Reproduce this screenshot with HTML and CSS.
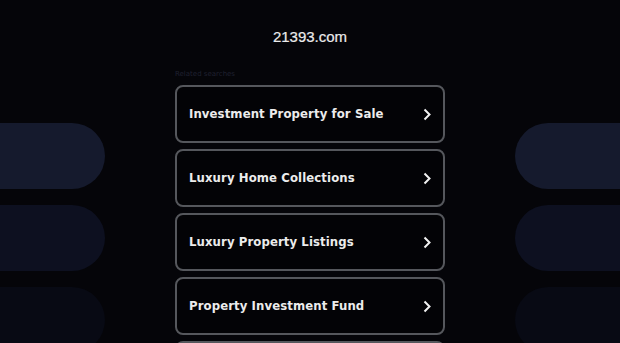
FILE: index.html
```html
<!DOCTYPE html>
<html lang="en">
<head>
    <meta charset="UTF-8">
    <meta name="viewport" content="width=device-width, initial-scale=1.0">
    <title>21393.com</title>
    <link rel="stylesheet" href="styles.css">
</head>
<body>

    <header class="site-header">
        <h1 class="domain">21393.com</h1>
    </header>

    <div class="layout">
        <aside class="side side-left">
            <div class="pill pill-1"></div>
            <div class="pill pill-2"></div>
            <div class="pill pill-3"></div>
        </aside>

        <main class="results">
            <div class="related-label">Related searches</div>

            <a class="result" href="#">
                <span>Investment Property for Sale</span>
                <svg class="chevron" width="8" height="13" viewBox="0 0 8 13"><path d="M1.5 1.5 L6.5 6.5 L1.5 11.5" fill="none" stroke="#f2f2f2" stroke-width="2"/></svg>
            </a>
            <a class="result" href="#">
                <span>Luxury Home Collections</span>
                <svg class="chevron" width="8" height="13" viewBox="0 0 8 13"><path d="M1.5 1.5 L6.5 6.5 L1.5 11.5" fill="none" stroke="#f2f2f2" stroke-width="2"/></svg>
            </a>
            <a class="result" href="#">
                <span>Luxury Property Listings</span>
                <svg class="chevron" width="8" height="13" viewBox="0 0 8 13"><path d="M1.5 1.5 L6.5 6.5 L1.5 11.5" fill="none" stroke="#f2f2f2" stroke-width="2"/></svg>
            </a>
            <a class="result" href="#">
                <span>Property Investment Fund</span>
                <svg class="chevron" width="8" height="13" viewBox="0 0 8 13"><path d="M1.5 1.5 L6.5 6.5 L1.5 11.5" fill="none" stroke="#f2f2f2" stroke-width="2"/></svg>
            </a>
            <a class="result result-hidden" href="#"></a>
        </main>

        <aside class="side side-right">
            <div class="pill pill-1"></div>
            <div class="pill pill-2"></div>
            <div class="pill pill-3"></div>
        </aside>
    </div>

</body>
</html>
```

FILE: styles.css
```css
body {
    margin: 0;
    padding: 0;
    background-color: #050509;
    font-family: 'DejaVu Sans', 'Liberation Sans', sans-serif;
    overflow: hidden;
    height: 343px;
}

.site-header {
    height: 62px;
    display: flex;
    justify-content: center;
    align-items: flex-start;
}

.domain {
    margin: 28px 0 0 0;
    font-family: 'Liberation Sans', Arial, sans-serif;
    font-size: 15px;
    font-weight: normal;
    color: #ececec;
    line-height: 18px;
    -webkit-text-stroke: 0.2px #ececec;
}

.layout {
    display: grid;
    grid-template-columns: 105px 270px 105px;
    justify-content: space-between;
}

.side {
    display: flex;
    flex-direction: column;
    gap: 16px;
    padding-top: 61px;
}

.pill {
    height: 66px;
    flex-shrink: 0;
}

.side-left .pill {
    border-radius: 0 33px 33px 0;
}

.side-right .pill {
    border-radius: 33px 0 0 33px;
}

.pill-1 {
    background: #151a2d;
}

.pill-2 {
    background: #0d1020;
}

.pill-3 {
    background: #080a14;
}

.results {
    display: flex;
    flex-direction: column;
    gap: 6px;
}

.related-label {
    font-size: 7px;
    color: #1f2030;
    height: 17px;
    line-height: 10px;
    margin-top: 7px;
    margin-bottom: -7px;
}

.result {
    display: flex;
    align-items: center;
    justify-content: space-between;
    flex-shrink: 0;
    height: 54px;
    padding: 0 12px 0 12px;
    border: 2px solid #55575c;
    border-radius: 8px;
    background: #030306;
    color: #ececec;
    text-decoration: none;
    font-size: 11.7px;
    font-weight: bold;
    letter-spacing: 0.1px;
}

.chevron {
    flex-shrink: 0;
}
```
